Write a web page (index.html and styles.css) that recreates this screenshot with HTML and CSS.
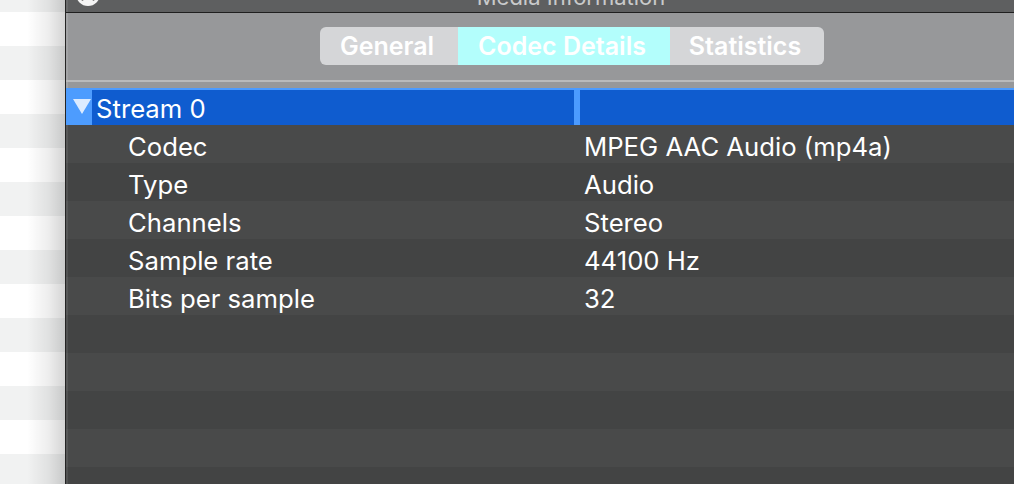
FILE: index.html
```html
<!DOCTYPE html>
<html>
<head>
<meta charset="utf-8">
<link rel="stylesheet" href="styles.css">
</head>
<body>
<div class="screen">
  <div class="sidebar"></div>
  <div class="window">
    <div class="titlebar">
      <div class="tb-left">
        <svg class="close" width="24" height="24" viewBox="0 0 24 24">
          <circle cx="12" cy="12" r="12" fill="#f4f4f4"/>
          <path d="M6.5 6.5 L17.5 17.5 M17.5 6.5 L6.5 17.5" stroke="#4a4a4a" stroke-width="2.4" stroke-linecap="round"/>
        </svg>
      </div>
      <div class="title">Media Information</div>
      <div class="tb-right"></div>
    </div>
    <div class="toolbar">
      <div class="segmented">
        <div class="seg seg-general">General</div>
        <div class="seg seg-codec active">Codec Details</div>
        <div class="seg seg-stats">Statistics</div>
      </div>
    </div>
    <div class="toolbar-rule"></div>
    <div class="header-gap"></div>
    <div class="table">
      <div class="stream">
        <div class="disclosure">
          <svg width="18" height="15" viewBox="0 0 18 15"><polygon points="0,0 18,0 9,15" fill="#dcebff"/></svg>
        </div>
        <div class="stream-name">Stream 0</div>
        <div class="col-sep"></div>
        <div class="stream-fill"></div>
      </div>
      <div class="row"><div class="label">Codec</div><div class="value">MPEG AAC Audio (mp4a)</div></div>
      <div class="row"><div class="label">Type</div><div class="value">Audio</div></div>
      <div class="row"><div class="label">Channels</div><div class="value">Stereo</div></div>
      <div class="row"><div class="label">Sample rate</div><div class="value">44100 Hz</div></div>
      <div class="row"><div class="label">Bits per sample</div><div class="value">32</div></div>
      <div class="row"></div>
      <div class="row"></div>
      <div class="row"></div>
      <div class="row"></div>
      <div class="row"></div>
    </div>
  </div>
</div>
</body>
</html>
```

FILE: styles.css
```css
html, body {
  margin: 0;
  padding: 0;
  width: 1014px;
  height: 484px;
  overflow: hidden;
  background: #444545;
}

.screen {
  display: flex;
  width: 1014px;
  height: 484px;
  overflow: hidden;
  font-family: Inter, "Liberation Sans", sans-serif;
}

.sidebar {
  flex: 0 0 65px;
  height: 484px;
  background:
    linear-gradient(to right, rgba(0,0,0,0) 0, rgba(0,0,0,0) 42%, rgba(0,0,0,0.07) 75%, rgba(0,0,0,0.17) 100%),
    repeating-linear-gradient(to bottom, #f1f2f2 0, #f1f2f2 34px, #ffffff 34px, #ffffff 68px);
  background-position: 0 0, 0 -22px;
}

.window {
  flex: 0 0 1010px;
  border-left: 1px solid #242424;
  display: flex;
  flex-direction: column;
  height: 484px;
  background: #444545;
}

.titlebar {
  height: 12px;
  flex: 0 0 12px;
  background: #5e5f60;
  border-bottom: 1px solid #1f1f1f;
  display: grid;
  grid-template-columns: 1fr auto 1fr;
  overflow: hidden;
  box-shadow: inset 2px 0 rgba(255,255,255,0.08);
}

.tb-left {
  padding-left: 10px;
}

.close {
  display: block;
  margin-top: -18px;
}

.title {
  font-size: 22px;
  line-height: 22px;
  margin-top: -14px;
  color: #c9cacb;
  white-space: nowrap;
}

.toolbar {
  flex: 0 0 67px;
  height: 67px;
  background: #97989a;
  display: flex;
  justify-content: center;
  align-items: flex-start;
  box-shadow: inset 2px 0 rgba(255,255,255,0.12);
  padding-left: 1px;
  box-sizing: border-box;
}

.segmented {
  margin-top: 14px;
  height: 38px;
  display: flex;
  background: #d5d6d8;
  border-radius: 6px;
  overflow: hidden;
}

.seg {
  font-size: 25px;
  font-weight: 600;
  line-height: 38px;
  color: #ffffff;
  white-space: nowrap;
  text-align: center;
  padding-right: 3px;
  box-sizing: border-box;
}

.seg-general { width: 138px; }
.seg-codec { width: 212px; }
.seg-stats { width: 154px; }

.seg.active {
  background: #b3fefc;
}

.toolbar-rule {
  flex: 0 0 2px;
  background: #b9babb;
}

.header-gap {
  flex: 0 0 6px;
  background: #97989a;
  box-shadow: inset 2px 0 rgba(255,255,255,0.12);
}

.table {
  flex: 1 1 auto;
  display: flex;
  flex-direction: column;
  overflow: hidden;
}

.stream {
  flex: 0 0 35px;
  height: 35px;
  border-top: 2px solid #4c9bff;
  background: #0f5ccf;
  display: flex;
  color: #ffffff;
  font-size: 25.7px;
  line-height: 37px;
}

.disclosure {
  flex: 0 0 26px;
  background: #4d9cfe;
  display: flex;
  align-items: center;
  padding-left: 7px;
  box-sizing: border-box;
}

.disclosure svg {
  display: block;
  margin-top: -3px;
}

.stream-name {
  flex: 0 0 482px;
  padding-left: 4px;
  box-sizing: border-box;
  white-space: nowrap;
}

.col-sep {
  flex: 0 0 6px;
  background: #4c9bff;
}

.stream-fill {
  flex: 1 1 auto;
}

.row {
  flex: 0 0 38px;
  height: 38px;
  display: flex;
  color: #ffffff;
  font-size: 25.7px;
  line-height: 43px;
  background: #494a4a;
  box-shadow: inset 2px 0 rgba(255,255,255,0.08);
}

.row:nth-child(odd) {
  background: #434444;
}

.label {
  flex: 0 0 514px;
  padding-left: 62px;
  box-sizing: border-box;
  white-space: nowrap;
}

.value {
  padding-left: 4px;
  white-space: nowrap;
}
```
